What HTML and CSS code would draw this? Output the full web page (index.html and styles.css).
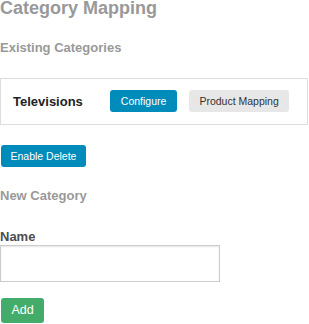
FILE: index.html
```html
<!DOCTYPE html>
<html>
<head>
<meta charset="utf-8">
<link rel="stylesheet" href="styles.css">
</head>
<body>
<h1 class="title">Category Mapping</h1>
<h2 class="section">Existing Categories</h2>
<div class="cat-row">
  <span class="cat-name">Televisions</span>
  <button class="btn btn-primary btn-configure">Configure</button>
  <button class="btn btn-secondary">Product Mapping</button>
</div>
<button class="btn btn-primary btn-enable">Enable Delete</button>
<h2 class="section section-new">New Category</h2>
<label class="field-label" for="name">Name</label>
<input class="field-input" id="name" type="text">
<button class="btn btn-success btn-add">Add</button>
</body>
</html>
```
FILE: styles.css
```css
html, body {
  margin: 0;
  padding: 0;
  background: #fff;
}
body {
  font-family: "Liberation Sans", Arial, Helvetica, sans-serif;
  width: 309px;
  overflow: hidden;
}
.title {
  font-size: 18px;
  font-weight: bold;
  line-height: 20px;
  color: #999;
  margin: -2px 0 0;
}
.section {
  font-size: 13px;
  font-weight: bold;
  line-height: 15px;
  color: #999;
  margin: 22px 0 0;
}
.cat-row {
  display: flex;
  align-items: center;
  width: 308px;
  box-sizing: border-box;
  border: 1px solid #ddd;
  margin-top: 23px;
  padding: 11px 12px 12px;
}
.cat-name {
  font-size: 13px;
  font-weight: bold;
  color: #222;
  margin-right: 27px;
}
.btn {
  display: block;
  height: 22px;
  padding: 0 10px;
  border: none;
  border-radius: 3px;
  font-family: "Liberation Sans", Arial, Helvetica, sans-serif;
  font-size: 10.5px;
  line-height: 22px;
  cursor: pointer;
}
.btn-primary {
  background: #008cba;
  color: #fff;
}
.btn-configure {
  padding: 0 11px;
}
.btn-secondary {
  background: #e7e7e7;
  color: #333;
  margin-left: 12px;
}
.btn-enable {
  margin: 20px 0 0 1px;
  padding: 0 9.5px;
}
.section-new {
  margin-top: 21px;
}
.field-label {
  display: block;
  font-size: 13px;
  font-weight: bold;
  line-height: 15px;
  color: #4d4d4d;
  margin-top: 26px;
}
.field-input {
  display: block;
  box-sizing: border-box;
  width: 220px;
  height: 37px;
  margin: 1px 0 0;
  border: 1px solid #ccc;
  box-shadow: inset 0 1px 2px rgba(0, 0, 0, 0.1);
  background: #fff;
  padding: 0 8px;
}
.btn-success {
  background: #43ac6a;
  color: #fff;
}
.btn-add {
  margin: 16px 0 0 1px;
  height: 25px;
  line-height: 25px;
  font-size: 12.5px;
  padding: 0 10.5px;
}
```
